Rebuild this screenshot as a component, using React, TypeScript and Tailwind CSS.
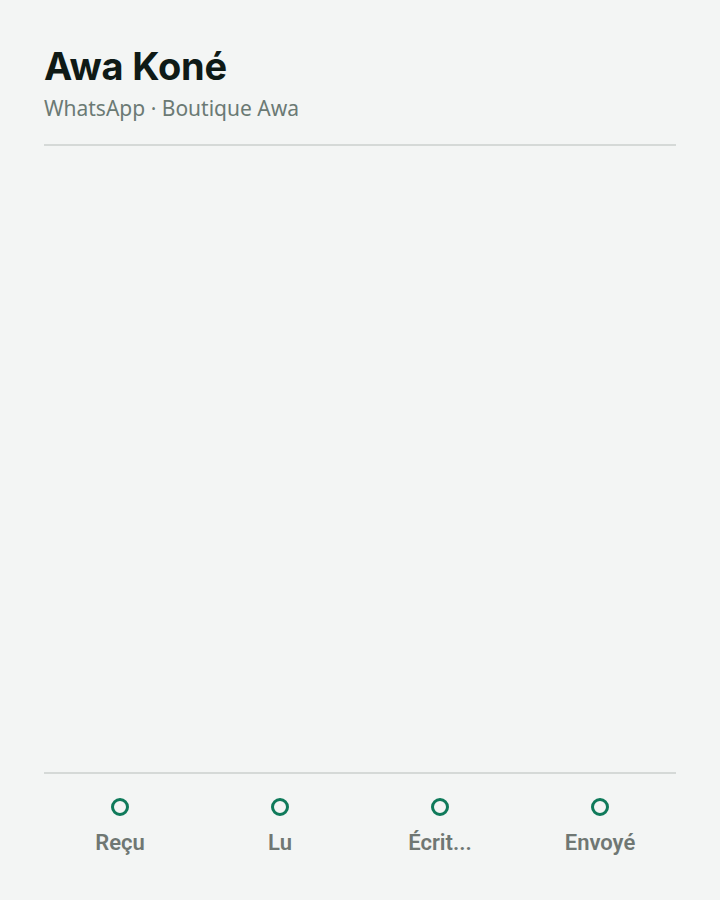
import React from "react";

const tabs = ["Reçu", "Lu", "Écrit...", "Envoyé"];

export default function App() {
  return (
    <div className="w-[720px] h-[900px] bg-[#f3f5f4] flex flex-col px-[44px]" style={{ fontFamily: "Inter, 'Noto Sans', sans-serif" }}>
      <div className="pt-[44px] pb-[22px] border-b-2 border-[#d5d9d7]">
        <h1 className="text-[38px] leading-[44px] font-bold text-[#0f1a16] tracking-[-0.2px]">Awa Koné</h1>
        <p className="mt-[6px] text-[21px] leading-[28px] text-[#6b7a74]" style={{ fontFamily: "'Noto Sans', sans-serif" }}>WhatsApp · Boutique Awa</p>
      </div>
      <div className="flex-1" />
      <div className="border-t-2 border-[#d5d9d7] pb-[40px]">
        <div className="-mx-[4px] grid grid-cols-4 pt-[24px]">
          {tabs.map((t) => (
            <div key={t} className="flex flex-col items-center">
              <span className="w-[18px] h-[18px] rounded-full border-[3px] border-[#0f7a5a]" />
              <span className="mt-[10px] text-[22px] leading-[34px] font-semibold text-[#6f7773]" style={{ fontFamily: "Roboto, sans-serif" }}>{t}</span>
            </div>
          ))}
        </div>
      </div>
    </div>
  );
}
